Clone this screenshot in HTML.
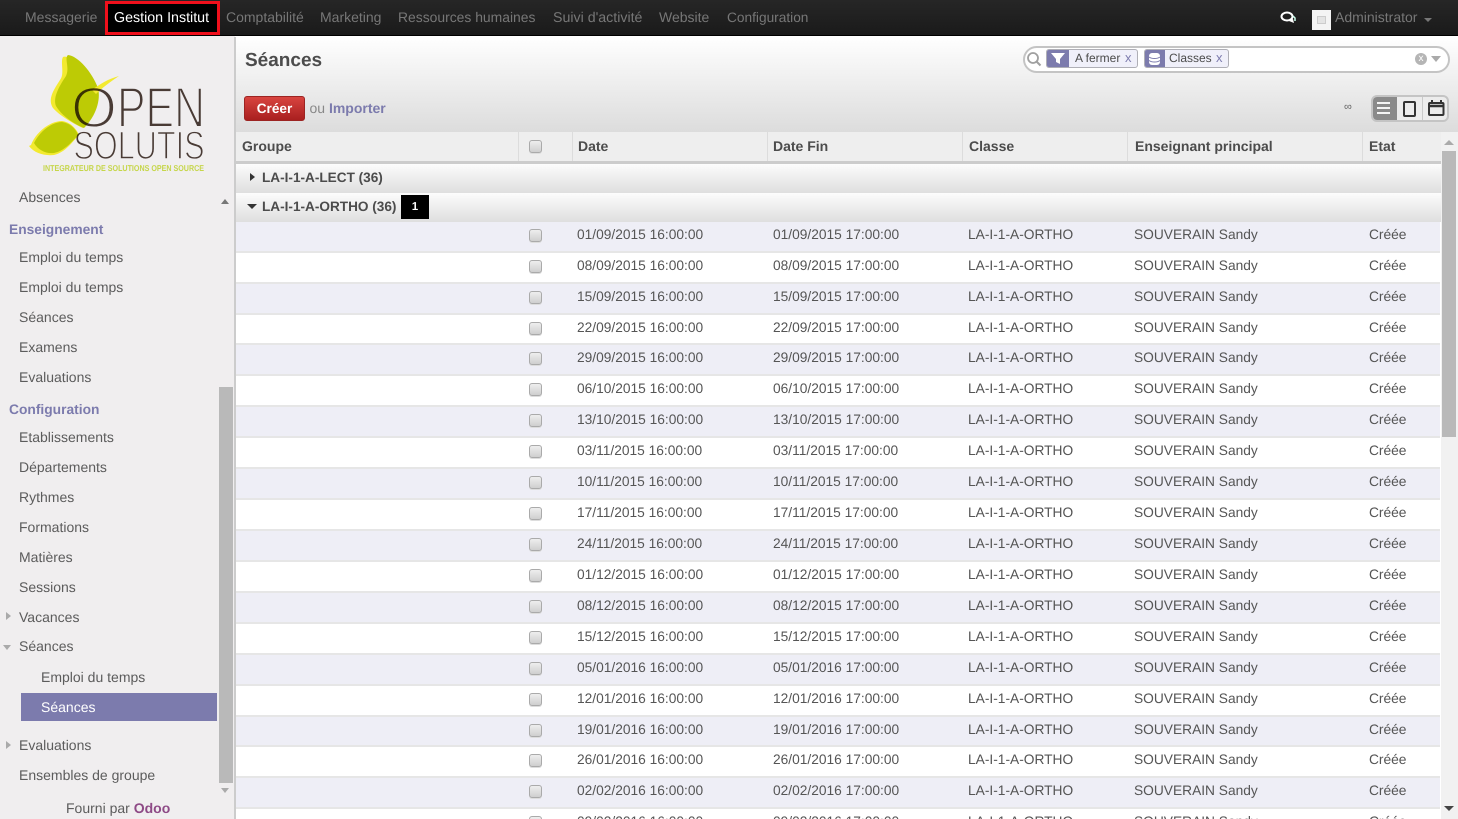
<!DOCTYPE html>
<html lang="fr"><head><meta charset="utf-8"><title>Séances</title>
<style>
*{box-sizing:border-box}
html,body{margin:0;padding:0;width:1458px;height:819px;overflow:hidden;background:#fff}
#w{position:relative;width:1458px;height:819px;overflow:hidden;background:#fff;font-family:"Liberation Sans",sans-serif;color:#4c4c4c;text-rendering:geometricPrecision;filter:blur(.3px)}
.abs,.top span,.side div{position:absolute;white-space:nowrap}
.top{position:absolute;left:0;top:0;width:1458px;height:36px;background:linear-gradient(#262626,#1a1a1a);border-bottom:1px solid #000;font-size:14px;color:#777}
.top span{top:9px;line-height:17px}
.side{position:absolute;left:0;top:37px;width:236px;height:782px;background:#f0eeef;border-right:2px solid #ccc;font-size:14px;color:#5c5c5c;overflow:hidden}
.side div{line-height:18px}
.side .h{font-weight:bold;color:#7c7bad;left:9px;font-size:13.8px}
.side .i{left:19px}
.tb{position:absolute;left:236px;top:36px;width:1222px;height:96px;background:linear-gradient(#fff,#dcdcdc)}
.hd{position:absolute;left:236px;top:132px;width:1205px;height:32px;background:#eee;border-bottom:3px solid #ccc;font-size:14px;font-weight:bold;color:#4c4c4c}
.hd span{position:absolute;top:6px;line-height:17px}
.hd i{position:absolute;top:0;width:1px;height:29px;background:#dcdcdc}
.g{position:absolute;left:236px;width:1205px;height:29px;background:linear-gradient(#fcfcfc,#dedede);font-size:13.6px;font-weight:bold;color:#4c4c4c}
.g span{position:absolute;left:26px;top:5px;line-height:17px}
.r{position:absolute;left:236px;width:1204px;height:31px;border-bottom:2px solid #e6e6e6;font-size:13.75px;color:#555;background:#fff}
.r.o{background:#eeeef6}
.r span{position:absolute;top:4px;line-height:17px;white-space:nowrap}
.a{left:341px}.b{left:537px}.c{left:732px}.d{left:898px}.e{left:1133px}
.cb{position:absolute;width:13px;height:13px;border:1px solid #aaa;border-radius:3px;background:linear-gradient(#eee,#cfcfcf);box-shadow:0 1px 0 #ddd}
.r .cb{left:292.500px;top:7px}
.tri{position:absolute;width:0;height:0}
.facet{position:absolute;top:49px;height:19px;background:#f0f0fa;border:1px solid #afafb6;border-radius:3px;font-size:12px;color:#4c4c4c;line-height:16px}
.facet b{position:absolute;left:0;top:0;height:17px;width:22px;background:#7c7bad;border-radius:2px 0 0 2px}
.facet span{position:absolute;top:0;white-space:nowrap}
.facet em{position:absolute;top:0;font-style:normal;color:#7c7bad;font-size:13px}
</style></head><body><div id="w">

<div class="top">
<span style="left:25px">Messagerie</span>
<div class="abs" style="left:105px;top:1px;width:115px;height:34px;border:3px solid #f0101c;background:#000"></div>
<span style="left:114px;top:10px;color:#fff;font-size:14.25px">Gestion Institut</span>
<span style="left:226px">Comptabilité</span>
<span style="left:320px">Marketing</span>
<span style="left:398px;font-size:13.9px">Ressources humaines</span>
<span style="left:553px;top:10px;font-size:14.2px">Suivi d'activité</span>
<span style="left:659px">Website</span>
<span style="left:727px;font-size:13.7px">Configuration</span>
<svg class="abs" style="left:1280px;top:11px" width="16" height="14" viewBox="0 0 16 14"><ellipse cx="7" cy="5.5" rx="5.5" ry="4" fill="none" stroke="#fff" stroke-width="2"/><path d="M9 10l5 2-1-4" fill="#fff"/><path d="M13 5l2 2v3" stroke="#cfe" stroke-width="1.5" fill="none"/></svg>
<div class="abs" style="left:1312px;top:10px;width:19px;height:20px;background:#f4f4f4"><div class="abs" style="left:5px;top:6px;width:9px;height:8px;border:1px solid #ccc;background:#e4e4e4"></div></div>
<span style="left:1335px;color:#777">Administrator</span>
<div class="tri" style="left:1424px;top:18px;border-left:4px solid transparent;border-right:4px solid transparent;border-top:4px solid #777"></div>
</div>

<div class="abs" style="left:0;top:36px;width:235px;height:1px;background:#f0eeef"></div>
<div class="side">
<svg class="abs" style="left:0;top:0" width="234" height="145" viewBox="0 37 234 145">
<path d="M63 57C68 54 84 68 92 84 96 92 97 100 95 108 92 116 88 124 83 128 74 124 60 116 53 108 48 100 52 92 60 80 65 74 60 62 63 57Z" fill="#f3ea30"/>
<path d="M68 55C78 56 92 72 98 88 101 100 96 116 84 128 74 124 62 116 56 106 53 98 58 88 66 76 70 68 64 58 68 55Z" fill="#bdcb05"/>
<path d="M31 145C36 132 50 121 62 121 70 122 76 128 79 135 72 142 66 152 54 155 44 156 34 153 29 146Z" fill="#f3ea30"/>
<path d="M34 143C40 131 52 122 62 122 70 123 76 129 78 135 72 142 64 151 54 153 46 154 38 150 34 143Z" fill="#bdcb05"/>
<path d="M92 90C100 84 108 79 119 76 110 82 102 88 96 94Z" fill="#f3ea30"/>
<g style="mix-blend-mode:multiply" font-family="Liberation Sans" fill="#4d3f38" stroke="#fff" paint-order="fill stroke">
<text x="71" y="127" font-size="57" stroke-width="2" textLength="46" lengthAdjust="spacingAndGlyphs">O</text>
<text x="117" y="127" font-size="57" stroke-width="2" textLength="88" lengthAdjust="spacingAndGlyphs">PEN</text>
<text x="73.500" y="159" font-size="40" stroke-width="1.500" textLength="131" lengthAdjust="spacingAndGlyphs">SOLUTIS</text>
</g>
<text x="43" y="171" font-size="8.5" font-weight="bold" fill="#c6d64a" textLength="161" lengthAdjust="spacingAndGlyphs">INTEGRATEUR DE SOLUTIONS OPEN SOURCE</text>
</svg>
<div class="i" style="top:151px">Absences</div>
<div class="h" style="top:184px">Enseignement</div>
<div class="i" style="top:211px">Emploi du temps</div>
<div class="i" style="top:241px">Emploi du temps</div>
<div class="i" style="top:271px">Séances</div>
<div class="i" style="top:301px">Examens</div>
<div class="i" style="top:331px">Evaluations</div>
<div class="h" style="top:364px">Configuration</div>
<div class="i" style="top:391px">Etablissements</div>
<div class="i" style="top:421px">Départements</div>
<div class="i" style="top:451px">Rythmes</div>
<div class="i" style="top:481px">Formations</div>
<div class="i" style="top:511px">Matières</div>
<div class="i" style="top:541px">Sessions</div>
<div class="i" style="top:571px">Vacances</div>
<div class="i" style="top:600px">Séances</div>
<div style="left:41px;top:631px">Emploi du temps</div>
<div style="left:21px;top:656px;width:196px;height:28px;background:#7c7bad"></div>
<div style="left:41px;top:661px;color:#fff">Séances</div>
<div class="i" style="top:699px">Evaluations</div>
<div class="i" style="top:729px">Ensembles de groupe</div>
<div style="left:66px;top:762px">Fourni par <b style="color:#8e4a86">Odoo</b></div>
<div class="tri" style="left:6px;top:575px;border-top:4px solid transparent;border-bottom:4px solid transparent;border-left:5px solid #aaa"></div>
<div class="tri" style="left:3px;top:608px;border-left:4px solid transparent;border-right:4px solid transparent;border-top:5px solid #aaa"></div>
<div class="tri" style="left:6px;top:704px;border-top:4px solid transparent;border-bottom:4px solid transparent;border-left:5px solid #aaa"></div>
<div style="left:219px;top:350px;width:14px;height:396px;background:#b9b9b9"></div>
<div class="tri" style="left:221px;top:162px;border-left:4px solid transparent;border-right:4px solid transparent;border-bottom:5px solid #777"></div>
<div class="tri" style="left:221px;top:751px;border-left:4px solid transparent;border-right:4px solid transparent;border-top:5px solid #aaa"></div>
</div>

<div class="tb"></div>
<div class="abs" style="left:245px;top:49px;font-size:19px;font-weight:bold;line-height:23px;color:#4c4c4c">Séances</div>
<div class="abs" style="left:244px;top:96px;width:61px;height:25px;background:linear-gradient(#d8443f,#a91f1f);border:1px solid #9c2422;border-radius:3px;color:#fff;font-size:13.6px;font-weight:bold;text-align:center;line-height:24px">Créer</div>
<div class="abs" style="left:309.500px;top:100px;font-size:14px;line-height:17px;color:#888">ou <b style="color:#7c7bad">Importer</b></div>

<div class="abs" style="left:1023px;top:46px;width:427px;height:27px;background:#fff;border:2px solid #c4c4c4;border-radius:14px"></div>
<svg class="abs" style="left:1026px;top:51px" width="16" height="16" viewBox="0 0 16 16"><circle cx="7" cy="7" r="5" fill="none" stroke="#a0a0a0" stroke-width="1.8"/><path d="M10.5 10.5L14.5 14.5" stroke="#a0a0a0" stroke-width="2"/></svg>
<div class="facet" style="left:1046px;width:92px"><b></b><span style="left:28px">A fermer</span><em style="left:78px">x</em></div>
<div class="facet" style="left:1144px;width:85px"><b style="width:20px"></b><span style="left:24px">Classes</span><em style="left:71px">x</em></div>
<svg class="abs" style="left:1050px;top:51px" width="16" height="15" viewBox="0 0 16 15"><path d="M1 2h14l-5 6v5l-4-2V8Z" fill="#fff"/></svg>
<svg class="abs" style="left:1148px;top:52px" width="13" height="14" viewBox="0 0 13 14"><rect x="1" y="1" width="11" height="12" rx="3" fill="#fff"/><path d="M1 5c3 2 8 2 11 0" stroke="#7c7bad" fill="none"/><path d="M1 8.500c3 2 8 2 11 0" stroke="#7c7bad" fill="none"/></svg>
<div class="abs" style="left:1415px;top:53px;width:12px;height:12px;border-radius:6px;background:#b5b5b5;color:#fff;font-size:10px;line-height:11px;text-align:center">x</div>
<div class="tri" style="left:1431px;top:56px;border-left:5px solid transparent;border-right:5px solid transparent;border-top:6px solid #aaa"></div>

<div class="abs" style="left:1344px;top:100px;font-size:11px;line-height:14px;color:#666">∞</div>
<div class="abs" style="left:1371px;top:95px;width:78px;height:27px;background:#ececec;border:2px solid #c4c4c4;border-radius:6px;overflow:hidden">
<div class="abs" style="left:-2px;top:-2px;width:26px;height:27px;background:#8a8a8a"></div>
<div class="abs" style="left:49px;top:0;width:1px;height:27px;background:#c9c9c9"></div>
</div>
<svg class="abs" style="left:1371px;top:95px" width="78" height="27" viewBox="0 0 78 27">
<path d="M6 8h13M6 13h13M6 18h13" stroke="#f4f4f4" stroke-width="2"/>
<rect x="33" y="7" width="11" height="14" rx="1" fill="none" stroke="#333" stroke-width="2"/>
<rect x="58" y="8" width="14.500" height="12" rx="1" fill="none" stroke="#333" stroke-width="2"/>
<path d="M57.500 11h15" stroke="#333" stroke-width="2.500"/><path d="M61 5v3M70 5v3" stroke="#333" stroke-width="2"/>
</svg>

<div class="hd">
<span style="left:6px">Groupe</span><i style="left:282px"></i><i style="left:336px"></i>
<span style="left:342px">Date</span><i style="left:531px"></i>
<span style="left:537px">Date Fin</span><i style="left:726px"></i>
<span style="left:733px">Classe</span><i style="left:891px"></i>
<span style="left:899px">Enseignant principal</span><i style="left:1126px"></i>
<span style="left:1133px">Etat</span>
<div class="cb" style="left:293px;top:8px"></div>
</div>

<div class="abs" style="left:1441px;top:132px;width:17px;height:687px;background:#f1f1f1"></div>
<div class="abs" style="left:1442px;top:151px;width:14px;height:286px;background:#b9b9b9"></div>
<div class="tri" style="left:1444px;top:140px;border-left:5px solid transparent;border-right:5px solid transparent;border-bottom:5px solid #aaa"></div>
<div class="tri" style="left:1444px;top:806px;border-left:5px solid transparent;border-right:5px solid transparent;border-top:5px solid #444"></div>

<div class="g" style="top:164px"><span>LA-I-1-A-LECT (36)</span></div>
<div class="g" style="top:193px"><span>LA-I-1-A-ORTHO (36)</span></div>
<div class="tri" style="left:250px;top:173px;border-top:4px solid transparent;border-bottom:4px solid transparent;border-left:5px solid #333"></div>
<div class="tri" style="left:247px;top:204px;border-left:5px solid transparent;border-right:5px solid transparent;border-top:5px solid #333"></div>
<div class="abs" style="left:401px;top:195px;width:28px;height:24px;background:#000;color:#fff;font-size:11.5px;font-weight:bold;text-align:center;line-height:25px">1</div>

<div class="r o" style="top:222px"><div class="cb"></div><span class="a">01/09/2015 16:00:00</span><span class="b">01/09/2015 17:00:00</span><span class="c">LA-I-1-A-ORTHO</span><span class="d">SOUVERAIN Sandy</span><span class="e">Créée</span></div>
<div class="r" style="top:253px"><div class="cb"></div><span class="a">08/09/2015 16:00:00</span><span class="b">08/09/2015 17:00:00</span><span class="c">LA-I-1-A-ORTHO</span><span class="d">SOUVERAIN Sandy</span><span class="e">Créée</span></div>
<div class="r o" style="top:284px"><div class="cb"></div><span class="a">15/09/2015 16:00:00</span><span class="b">15/09/2015 17:00:00</span><span class="c">LA-I-1-A-ORTHO</span><span class="d">SOUVERAIN Sandy</span><span class="e">Créée</span></div>
<div class="r" style="top:315px;height:30px"><div class="cb"></div><span class="a">22/09/2015 16:00:00</span><span class="b">22/09/2015 17:00:00</span><span class="c">LA-I-1-A-ORTHO</span><span class="d">SOUVERAIN Sandy</span><span class="e">Créée</span></div>
<div class="r o" style="top:345px"><div class="cb"></div><span class="a">29/09/2015 16:00:00</span><span class="b">29/09/2015 17:00:00</span><span class="c">LA-I-1-A-ORTHO</span><span class="d">SOUVERAIN Sandy</span><span class="e">Créée</span></div>
<div class="r" style="top:376px"><div class="cb"></div><span class="a">06/10/2015 16:00:00</span><span class="b">06/10/2015 17:00:00</span><span class="c">LA-I-1-A-ORTHO</span><span class="d">SOUVERAIN Sandy</span><span class="e">Créée</span></div>
<div class="r o" style="top:407px"><div class="cb"></div><span class="a">13/10/2015 16:00:00</span><span class="b">13/10/2015 17:00:00</span><span class="c">LA-I-1-A-ORTHO</span><span class="d">SOUVERAIN Sandy</span><span class="e">Créée</span></div>
<div class="r" style="top:438px"><div class="cb"></div><span class="a">03/11/2015 16:00:00</span><span class="b">03/11/2015 17:00:00</span><span class="c">LA-I-1-A-ORTHO</span><span class="d">SOUVERAIN Sandy</span><span class="e">Créée</span></div>
<div class="r o" style="top:469px"><div class="cb"></div><span class="a">10/11/2015 16:00:00</span><span class="b">10/11/2015 17:00:00</span><span class="c">LA-I-1-A-ORTHO</span><span class="d">SOUVERAIN Sandy</span><span class="e">Créée</span></div>
<div class="r" style="top:500px"><div class="cb"></div><span class="a">17/11/2015 16:00:00</span><span class="b">17/11/2015 17:00:00</span><span class="c">LA-I-1-A-ORTHO</span><span class="d">SOUVERAIN Sandy</span><span class="e">Créée</span></div>
<div class="r o" style="top:531px"><div class="cb"></div><span class="a">24/11/2015 16:00:00</span><span class="b">24/11/2015 17:00:00</span><span class="c">LA-I-1-A-ORTHO</span><span class="d">SOUVERAIN Sandy</span><span class="e">Créée</span></div>
<div class="r" style="top:562px"><div class="cb"></div><span class="a">01/12/2015 16:00:00</span><span class="b">01/12/2015 17:00:00</span><span class="c">LA-I-1-A-ORTHO</span><span class="d">SOUVERAIN Sandy</span><span class="e">Créée</span></div>
<div class="r o" style="top:593px"><div class="cb"></div><span class="a">08/12/2015 16:00:00</span><span class="b">08/12/2015 17:00:00</span><span class="c">LA-I-1-A-ORTHO</span><span class="d">SOUVERAIN Sandy</span><span class="e">Créée</span></div>
<div class="r" style="top:624px"><div class="cb"></div><span class="a">15/12/2015 16:00:00</span><span class="b">15/12/2015 17:00:00</span><span class="c">LA-I-1-A-ORTHO</span><span class="d">SOUVERAIN Sandy</span><span class="e">Créée</span></div>
<div class="r o" style="top:655px"><div class="cb"></div><span class="a">05/01/2016 16:00:00</span><span class="b">05/01/2016 17:00:00</span><span class="c">LA-I-1-A-ORTHO</span><span class="d">SOUVERAIN Sandy</span><span class="e">Créée</span></div>
<div class="r" style="top:686px"><div class="cb"></div><span class="a">12/01/2016 16:00:00</span><span class="b">12/01/2016 17:00:00</span><span class="c">LA-I-1-A-ORTHO</span><span class="d">SOUVERAIN Sandy</span><span class="e">Créée</span></div>
<div class="r o" style="top:717px;height:30px"><div class="cb"></div><span class="a">19/01/2016 16:00:00</span><span class="b">19/01/2016 17:00:00</span><span class="c">LA-I-1-A-ORTHO</span><span class="d">SOUVERAIN Sandy</span><span class="e">Créée</span></div>
<div class="r" style="top:747px"><div class="cb"></div><span class="a">26/01/2016 16:00:00</span><span class="b">26/01/2016 17:00:00</span><span class="c">LA-I-1-A-ORTHO</span><span class="d">SOUVERAIN Sandy</span><span class="e">Créée</span></div>
<div class="r o" style="top:778px"><div class="cb"></div><span class="a">02/02/2016 16:00:00</span><span class="b">02/02/2016 17:00:00</span><span class="c">LA-I-1-A-ORTHO</span><span class="d">SOUVERAIN Sandy</span><span class="e">Créée</span></div>
<div class="r" style="top:809px"><div class="cb"></div><span class="a">09/02/2016 16:00:00</span><span class="b">09/02/2016 17:00:00</span><span class="c">LA-I-1-A-ORTHO</span><span class="d">SOUVERAIN Sandy</span><span class="e">Créée</span></div>
</div></body></html>
